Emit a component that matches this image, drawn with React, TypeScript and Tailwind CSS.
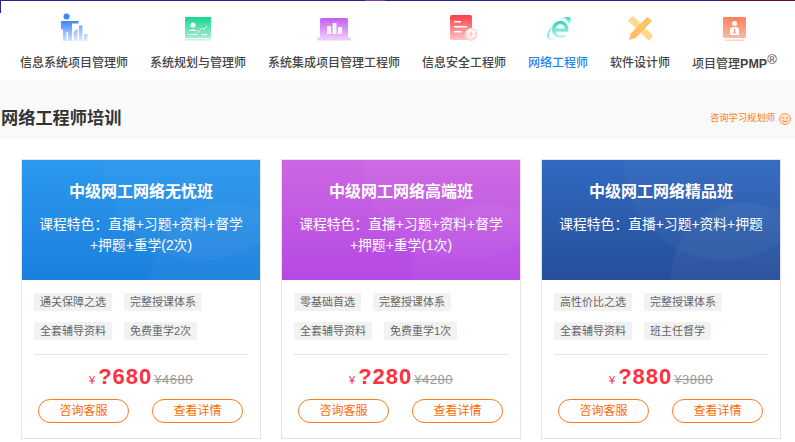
const navItems = [
  { label: "信息系统项目管理师", icon: <PersonIcon /> },
  { label: "系统规划与管理师", icon: <BoardIcon /> },
  { label: "系统集成项目管理工程师", icon: <LaptopIcon /> },
  { label: "信息安全工程师", icon: <ShieldDocIcon /> },
  { label: "网络工程师", icon: <IeIcon />, active: true },
  { label: "软件设计师", icon: <RulerIcon /> },
  { label: "项目管理", icon: <ScreenIcon />, sup: true },
]

const courses = [
  {
    title: "中级网工网络无忧班",
    lines: ["课程特色：直播+习题+资料+督学", "+押题+重学(2次)"],
    tags: ["通关保障之选", "完整授课体系", "全套辅导资料", "免费重学2次"],
    price: "?680",
    oldPrice: "¥4680",
    header: "from-[#2c98ee] to-[#1a80dc]",
  },
  {
    title: "中级网工网络高端班",
    lines: ["课程特色：直播+习题+资料+督学", "+押题+重学(1次)"],
    tags: ["零基础首选", "完整授课体系", "全套辅导资料", "免费重学1次"],
    price: "?280",
    oldPrice: "¥4280",
    header: "from-[#cd66e2] to-[#b548e4]",
  },
  {
    title: "中级网工网络精品班",
    lines: ["课程特色：直播+习题+资料+押题"],
    tags: ["高性价比之选", "完整授课体系", "全套辅导资料", "班主任督学"],
    price: "?880",
    oldPrice: "¥3880",
    header: "from-[#3169c0] to-[#254f9a]",
  },
]

function PersonIcon() {
  return (
    <svg width="28" height="28" viewBox="0 0 28 28">
      <defs>
        <linearGradient id="gp" x1="0" y1="0" x2="0" y2="1">
          <stop offset="0" stopColor="#3f83f8" />
          <stop offset="1" stopColor="#d5e5ff" />
        </linearGradient>
      </defs>
      <circle cx="6.5" cy="3.5" r="3" fill="#3f83f8" />
      <path d="M1 8h17.5v2.5H12V28H8v-9H6.5v9H3v-11L1 16z" fill="url(#gp)" />
      <path d="M13.5 19l4-3.5V28h-4zM19 12.5h3.500V28H19zM24 21h3.500v7H24z" fill="url(#gp)" opacity="0.7" />
    </svg>
  )
}

function BoardIcon() {
  return (
    <svg width="26" height="24" viewBox="0 0 26 24">
      <defs>
        <linearGradient id="gb" x1="0" y1="0" x2="0" y2="1">
          <stop offset="0" stopColor="#15d68e" />
          <stop offset="1" stopColor="#a6eccf" />
        </linearGradient>
      </defs>
      <rect width="26" height="21" fill="url(#gb)" />
      <rect y="22" width="26" height="1.5" fill="#c5f2e1" />
      <circle cx="8" cy="8" r="2.5" fill="#fff" />
      <path d="M4 14c1-2 7-2 8 0zM4 17h8v1H4zM17 17h5v1h-5z" fill="#fff" />
      <path d="M12 16l5-5 1.5 1.5L22 9" stroke="#fff" strokeWidth="1" fill="none" />
    </svg>
  )
}

function LaptopIcon() {
  return (
    <svg width="34" height="23" viewBox="0 0 34 23">
      <defs>
        <linearGradient id="gl" x1="0" y1="0" x2="0" y2="1">
          <stop offset="0" stopColor="#c45cf0" />
          <stop offset="1" stopColor="#efc4fb" />
        </linearGradient>
      </defs>
      <rect x="3" y="0" width="28" height="20" rx="1.5" fill="url(#gl)" />
      <rect x="0" y="19.5" width="34" height="3" rx="1.5" fill="#f0c8fb" />
      <path d="M10 8h4v8h-4zM15.5 5h4v11h-4zM21 9h4v7h-4z" fill="#fff" opacity="0.9" />
    </svg>
  )
}

function ShieldDocIcon() {
  return (
    <svg width="28" height="26" viewBox="0 0 28 26">
      <defs>
        <linearGradient id="gs" x1="0" y1="0" x2="0" y2="1">
          <stop offset="0" stopColor="#ff3d47" />
          <stop offset="1" stopColor="#ffc4c4" />
        </linearGradient>
      </defs>
      <rect width="22" height="25" rx="2" fill="url(#gs)" />
      <path d="M4 6h7v1.5H4zM4 11h13v1.5H4zM4 16h8v1.5H4z" fill="#fff" />
      <circle cx="21" cy="19.5" r="6.5" fill="#ffd9d9" />
      <path d="M21 14.500l4 1.500c0 4-1.500 6.500-4 8-2.500-1.500-4-4-4-8z" fill="#fff" />
      <path d="M21 16.500v6M18.500 19h5" stroke="#ffb3b3" strokeWidth="1" />
    </svg>
  )
}

function IeIcon() {
  return (
    <svg width="27" height="25" viewBox="0 0 28 26">
      <defs>
        <linearGradient id="gi" x1="0" y1="0" x2="0" y2="1">
          <stop offset="0" stopColor="#2ed8ac" />
          <stop offset="1" stopColor="#c4f0f8" />
        </linearGradient>
      </defs>
      <path d="M16 5a9 9 0 0 0-9 9 9 9 0 0 0 15.500 6h-5a4.500 4.500 0 0 1-6-3.500H24A9 9 0 0 0 16 5zm-4.500 8a4.500 4.500 0 0 1 9 0z" fill="url(#gi)" />
      <path d="M7 11C3 16 1 21 2.500 23.500c1.500 2 5 1.500 9-.5-3.500 1-6 1-7-.5-1-2 0-6 2.500-11.500z" fill="url(#gi)" />
      <path d="M17 3c4-2.500 7.500-3 9-1.500 1.500 1.500 1 4-1 7-.5-2-2-4.500-4-5.500 1.500-.5 2.500-.5 3 0-1.500-1-4-1-7 0z" fill="url(#gi)" />
    </svg>
  )
}

function RulerIcon() {
  return (
    <svg width="25" height="25" viewBox="0 0 26 26">
      <path d="M5 0L26 20l-4 6L0 5z" fill="#ffd88f" />
      <path d="M20 1l5 4L8 23l-7 2 2-7z" fill="#ffc064" />
      <path d="M12 8l1.500-1.500M15 11l1.500-1.500M18 14l1.500-1.500" stroke="#fff" strokeWidth="1" />
    </svg>
  )
}

function ScreenIcon() {
  return (
    <svg width="23" height="24" viewBox="0 0 23 24">
      <defs>
        <linearGradient id="gm" x1="0" y1="0" x2="0" y2="1">
          <stop offset="0" stopColor="#ff7f5c" />
          <stop offset="1" stopColor="#ffb9a3" />
        </linearGradient>
      </defs>
      <rect width="23" height="21" rx="1" fill="url(#gm)" />
      <rect x="2" y="22.500" width="19" height="1.500" fill="#ffd3c5" />
      <circle cx="11.500" cy="6.500" r="2.500" fill="#fff" />
      <path d="M7 18v-5c0-2 1.500-3 3-3h3c1.500 0 3 1 3 3v5z" fill="#fff" />
      <path d="M11.500 10.500l-1 5 1 1.500 1-1.500z" fill="#ff8f70" />
    </svg>
  )
}

function FaceIcon() {
  return (
    <svg width="12" height="12" viewBox="0 0 12 12">
      <circle cx="6" cy="6" r="5.500" fill="#ffe3cc" stroke="#ff9a5c" />
      <circle cx="4" cy="5" r="0.800" fill="#ff7a1a" />
      <circle cx="8" cy="5" r="0.800" fill="#ff7a1a" />
      <path d="M3.500 7.500c1.500 1.500 3.500 1.500 5 0" stroke="#ff7a1a" fill="none" />
    </svg>
  )
}

function CourseCard({ course }: { course: (typeof courses)[number] }) {
  return (
    <div className="w-[240px] h-[280px] border border-[#e5e5e5] bg-white">
      {/* HEADER */}
      <div className={`relative h-[120px] overflow-hidden bg-gradient-to-b ${course.header} text-center text-white`}>
        <div className="absolute left-[81px] top-[-100px] w-[200px] h-[200px] rounded-full bg-white/[0.03]" />
        <div className="absolute left-[129px] top-[43px] w-[150px] h-[150px] rounded-full bg-white/[0.04]" />
        <h3 className="relative pt-[20px] text-[16px] leading-[24px] font-bold">{course.title}</h3>
        <div className="relative mt-[10px] text-[13.8px] leading-[21px]">
          {course.lines.map(line => (
            <p key={line}>{line}</p>
          ))}
        </div>
      </div>

      {/* TAGS */}
      <div className="flex flex-wrap content-start gap-x-[12px] gap-y-[11px] h-[74px] pt-[13px] pl-[12px] pr-[10px]">
        {course.tags.map(tag => (
          <span key={tag} className="h-[18px] px-[6px] bg-[#f2f2f2] text-[11px] leading-[18px] text-[#666]">
            {tag}
          </span>
        ))}
      </div>

      <div className="mx-[12px] h-px bg-[#e5e5e5]" />

      {/* PRICE */}
      <div className="flex items-baseline justify-center h-[44px] pt-[7px] text-[#ff3040]">
        <span className="text-[11px] mr-[3px]">¥</span>
        <span className="text-[22px] leading-[30px] font-bold tracking-[1px]">{course.price}</span>
        <span className="ml-[2px] text-[13px] tracking-[0.5px] text-[#999] line-through">{course.oldPrice}</span>
      </div>

      {/* BUTTONS */}
      <div className="flex justify-between pl-[16px] pr-[17px]">
        <button className="w-[91px] h-[24px] rounded-full border border-[#ff7a1a] text-[12px] leading-[22px] text-[#ff6a00]">
          咨询客服
        </button>
        <button className="w-[91px] h-[24px] rounded-full border border-[#ff7a1a] text-[12px] leading-[22px] text-[#ff6a00]">
          查看详情
        </button>
      </div>
    </div>
  )
}

export default function App() {
  return (
    <main className="relative w-[795px] h-[442px] overflow-hidden bg-white font-['Liberation_Sans','Noto_Sans_CJK_SC',sans-serif]">
      {/* TOP LINE */}
      <div className="flex h-px">
        <div className="w-[365px] bg-[#2a2490]" />
        <div className="w-[20px] bg-[#7a3fa8]" />
        <div className="flex-1 bg-[#2a2490]" />
        <div className="w-[77px] bg-[#6b0a3c]" />
      </div>
      <div className="absolute left-0 top-0 w-px h-[13px] bg-[#2a2490]" />

      {/* NAV */}
      <nav className="flex gap-[22px] h-[79px] pl-[20px]">
        {navItems.map(item => (
          <div key={item.label} className="flex flex-col items-center">
            <div className="flex items-end justify-center h-[40px]">{item.icon}</div>
            <div className={`${item.sup ? "mt-[9px]" : "mt-[12px]"} text-[12px] leading-[20px] font-medium whitespace-nowrap ${item.active ? "text-[#1d86f0]" : "text-[#444]"}`}>
              {item.label}
              {item.sup && <span className="font-bold text-[12.5px]">PMP</span>}
              {item.sup && <span className="text-[13px] align-[4px]">®</span>}
            </div>
          </div>
        ))}
      </nav>

      {/* SECTION TITLE */}
      <div className="flex items-center justify-between h-[59px] pt-[18px] pl-px pr-[4px] bg-[#f9f9f9]">
        <h2 className="text-[17.2px] font-bold text-[#333]">网络工程师培训</h2>
        <div className="flex items-center gap-[4px] text-[9.3px] text-[#ff7a1a]">
          咨询学习规划师
          <FaceIcon />
        </div>
      </div>

      {/* COURSES */}
      <div className="flex gap-[20px] ml-px pt-[20px] pl-[20px]">
        {courses.map(course => (
          <CourseCard key={course.title} course={course} />
        ))}
      </div>
    </main>
  )
}
